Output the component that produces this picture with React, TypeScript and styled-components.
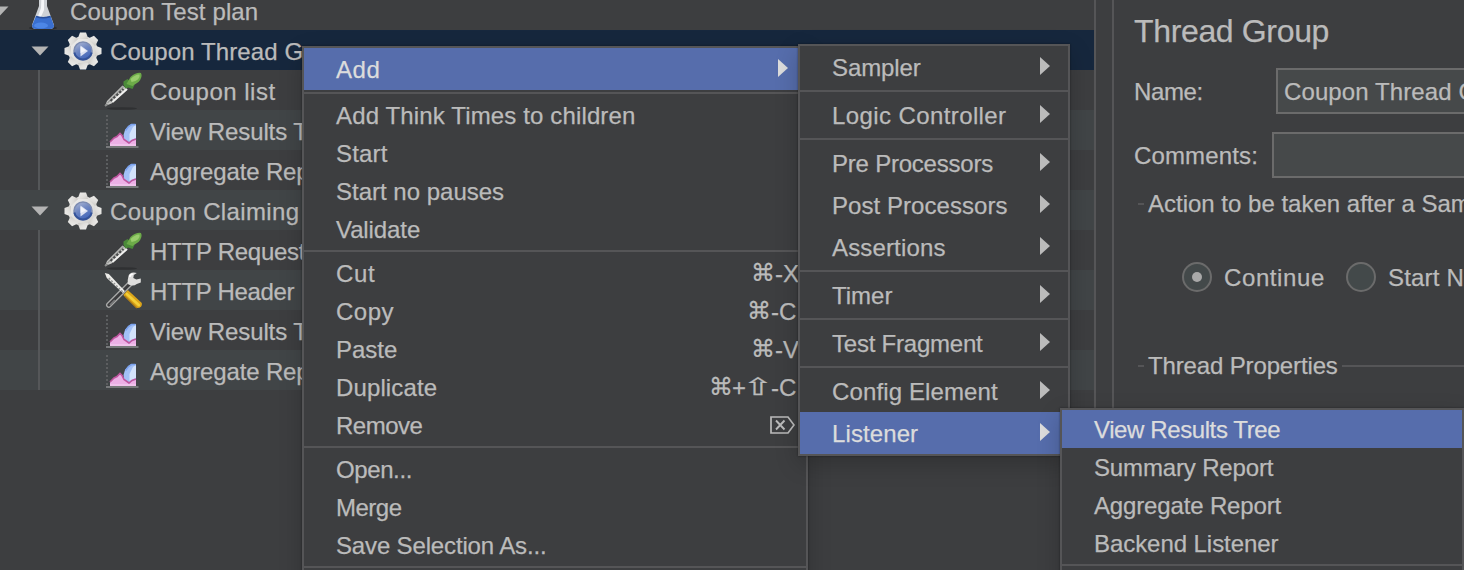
import React from "react";
import styled, { createGlobalStyle } from "styled-components";

const GlobalStyle = createGlobalStyle`
  html, body { margin: 0; padding: 0; background: #3d3e40; }
  * { box-sizing: border-box; }
`;

const Window = styled.div`
  position: relative;
  display: flex;
  width: 1464px;
  height: 570px;
  overflow: hidden;
  background: #3d3e40;
  color: #bbbbbb;
  font-family: "Liberation Sans", Arial, sans-serif;
  font-size: 24px;
  white-space: nowrap;
  -webkit-text-stroke: 0.25px currentColor;
`;

const Text = styled.span<{ $ls?: number }>`
  letter-spacing: ${(p) => p.$ls ?? 0}px;
`;

/* ---------- tree ---------- */

const TreePane = styled.div`
  width: 1096px;
  height: 570px;
  flex: none;
  border-right: 2px solid #555557;
  overflow: hidden;
`;

const TreeList = styled.div`
  margin-top: -10px;
`;

const TreeRow = styled.div<{ $tone: "plain" | "stripe" | "selected" }>`
  display: flex;
  align-items: stretch;
  height: 40px;
  line-height: 43px;
  background: ${(p) =>
    p.$tone === "selected" ? "#16273d" : p.$tone === "stripe" ? "#414547" : "#3d3e40"};
`;

const Guide = styled.div`
  width: 2px;
  margin: 0 64px 0 38px;
  background: #555759;
`;

const Toggle = styled.div<{ $depth: number }>`
  width: ${(p) => 22 + p.$depth * 40}px;
  display: flex;
  justify-content: flex-end;
  padding: 16px 13px 0 0;
  svg { flex: none; }
`;

const IconSlot = styled.div<{ $leaf: boolean }>`
  flex: none;
  width: 40px;
  height: 40px;
  margin-right: ${(p) => (p.$leaf ? 6 : 8)}px;
  svg { display: block; overflow: visible; }
`;

const Down = () => (
  <svg width="18" height="10" viewBox="0 0 18 10">
    <path d="M0.5 0.5H17.5L9 9.5Z" fill="#b4b4b4" />
  </svg>
);

const Flask = () => (
  <svg width="40" height="40" viewBox="0 0 40 40">
    <ellipse cx="21" cy="38" rx="14" ry="2" fill="#2b2c2e" />
    <path d="M17 4H25V16L32 35Q32 39 28 39H14Q10 39 10 35L17 16Z" fill="#cfd2d6" />
    <path d="M19.5 5H22V20L18 29H15L19 18Z" fill="#f5f6f8" />
    <path d="M14 26Q21 28 28.500 26L32 35.500Q32 39 28 39H14Q10 39 10 35.500Z" fill="#3a6fcf" />
    <path d="M14 26.500Q21 29 28.500 26.500" stroke="#2a4f9a" strokeWidth="1.500" fill="none" />
    <ellipse cx="19" cy="35.500" rx="7" ry="3" fill="#4d86e6" />
  </svg>
);

const Gear = () => (
  <svg width="40" height="40" viewBox="0 0 40 40">
    <defs>
      <linearGradient id="gearBody" x1="0" y1="0" x2="1" y2="1">
        <stop offset="0" stopColor="#efefed" />
        <stop offset="0.6" stopColor="#e0dfdc" />
        <stop offset="1" stopColor="#cbc9c5" />
      </linearGradient>
      <linearGradient id="gearBall" x1="0" y1="0" x2="0.5" y2="1">
        <stop offset="0" stopColor="#b4bdd6" />
        <stop offset="0.5" stopColor="#7088c2" />
        <stop offset="1" stopColor="#4468ba" />
      </linearGradient>
    </defs>
    <g fill="url(#gearBody)" transform="translate(21 21)">
      <circle r="14.800" />
      {[0, 45, 90, 135, 180, 225, 270, 315].map((a) => (
        <path key={a} d="M-5.400 -12L-3 -18.500H3L5.400 -12Z" transform={`rotate(${a})`} />
      ))}
    </g>
    <circle cx="21" cy="21" r="9" fill="url(#gearBall)" stroke="#7c8cb2" strokeWidth="1.500" />
    <path d="M12.300 22.500A8.900 8.900 0 0 0 29.700 22.500" stroke="#34539a" strokeWidth="2" fill="none" />
    <path d="M18.500 15.500L26 21L18.500 26.500Z" fill="#dbe1f1" />
    <path d="M18.500 16.500L24 20.500L18.500 23Z" fill="#f1f4fb" />
  </svg>
);

const Pipette = () => (
  <svg width="40" height="40" viewBox="0 0 40 40">
    <ellipse cx="18" cy="38.500" rx="15" ry="1.300" fill="#2f3032" />
    <g transform="translate(-1.500 0)">
      <path d="M2.500 36L4.500 31L20 15.500L25 19.500L9 33.500Z" fill="#c9c9c7" />
      <path d="M5 33L21 16.500" stroke="#9b9c9a" strokeWidth="1.600" fill="none" />
      <path d="M8 31L21 19" stroke="#4a4b4c" strokeWidth="2.200" strokeDasharray="2.500 1.500" />
      <path d="M10 32L24.500 19" stroke="#f0f0ee" strokeWidth="1.800" />
      <path d="M2.500 36L5 34" stroke="#8a8b8a" strokeWidth="2" />
      <path d="M21 11.500L25 9L32 15L30 19L26 17.500L23 18.500L21 15Z" fill="#4a8a38" />
      <path d="M24 14L28 7Q34 2 38.500 3Q40.500 7 36 12L30 16Z" fill="#6dab49" />
      <path d="M28 9Q33 4 37 4.500Q38 8 33 11L29 12Z" fill="#98cc6c" />
    </g>
  </svg>
);

const Chart = () => (
  <svg width="40" height="40" viewBox="0 0 40 40">
    <path d="M3 5V37" stroke="#5c5e60" strokeWidth="2" strokeDasharray="2 2" />
    <path d="M2 37H34.500" stroke="#77797b" strokeWidth="2" />
    <path d="M32 14H27.500L24.500 16L21 20L19.500 25L20 29L25 34L32 31Z" fill="#a3c0f6" />
    <path d="M32 15L29 17L25.500 24L25.500 31L32 28Z" fill="#d4e3fb" />
    <path d="M31.500 14.500H27.500L24.500 16.500L21.500 20.500" stroke="#7ba2ee" strokeWidth="1.600" fill="none" />
    <path d="M6 36V32.500L10 28L13 26.500L16 23.500L18 25L20 29L25 33.500L28 31L32 29.500V36Z" fill="#ecb0e6" />
    <path d="M6 32L10 28L13 26.500L16 23.500L18 25.500L20 29.500L25 33L28 30.500L32 29" stroke="#bf559f" strokeWidth="1.600" fill="none" />
    <path d="M6 35H32" stroke="#f0c2ec" strokeWidth="2" />
  </svg>
);

const Tools = () => (
  <svg width="40" height="40" viewBox="0 0 40 40">
    <g transform="translate(-1.200 0)">
      <path d="M6 35L29 12" stroke="#a9aaa9" strokeWidth="5.600" strokeLinecap="round" />
      <path d="M6 35L27 14" stroke="#3a3b3d" strokeWidth="3" strokeLinecap="round" />
      <path d="M7 35L12 30" stroke="#77797a" strokeWidth="1.300" />
      <path d="M31 2.500Q26 2.500 25.500 7Q24.500 10 25 14Q30 17 34 14L38 12.500V8.500L33.500 9.500L30.500 8L31 5L34 3Z" fill="#dededd" />
      <path d="M27 7Q27 4.500 30 4" stroke="#fff" strokeWidth="1.600" fill="none" />
      <path d="M2 3L6 4L22 21L20 23L4 8Z" fill="#ecece9" />
      <path d="M6 8L20 22" stroke="#8f9190" strokeWidth="1.400" strokeDasharray="2 1.500" />
      <path d="M20.500 25L25 20L39 33Q40 38 34 38Z" fill="#dba51a" />
      <path d="M24 24L36 35" stroke="#f3cf38" strokeWidth="2.600" strokeLinecap="round" />
      <path d="M22 26L34 38" stroke="#b07f16" strokeWidth="1.200" />
    </g>
  </svg>
);

type Node = {
  label: string;
  icon: () => React.ReactElement;
  depth: number;
  tone: "plain" | "stripe" | "selected";
  ls?: number;
};

const nodes: Node[] = [
  { label: "Coupon Test plan", icon: Flask, depth: 0, tone: "plain", ls: 0.12 },
  { label: "Coupon Thread Group", icon: Gear, depth: 1, tone: "selected", ls: 0.1 },
  { label: "Coupon list", icon: Pipette, depth: 2, tone: "plain", ls: 0.5 },
  { label: "View Results Tree", icon: Chart, depth: 2, tone: "stripe", ls: -0.1 },
  { label: "Aggregate Report", icon: Chart, depth: 2, tone: "plain", ls: -0.15 },
  { label: "Coupon Claiming", icon: Gear, depth: 1, tone: "stripe", ls: 0.35 },
  { label: "HTTP Request", icon: Pipette, depth: 2, tone: "plain", ls: -0.25 },
  { label: "HTTP Header Manager", icon: Tools, depth: 2, tone: "stripe", ls: -0.3 },
  { label: "View Results Tree", icon: Chart, depth: 2, tone: "plain", ls: -0.1 },
  { label: "Aggregate Report", icon: Chart, depth: 2, tone: "stripe", ls: -0.15 },
];

/* ---------- details panel ---------- */

const Details = styled.div`
  flex: 1;
  min-width: 0;
  margin-left: 16px;
  padding: 0 0 0 20px;
  border-left: 2px solid #555557;
  overflow: hidden;
`;

const Title = styled.div`
  height: 68px;
  line-height: 62px;
  font-size: 32px;
`;

const FormRow = styled.div<{ $label: number; $gap: number }>`
  display: grid;
  grid-template-columns: ${(p) => p.$label}px 400px;
  height: 46px;
  margin-bottom: ${(p) => p.$gap}px;
  line-height: 48px;
`;

const Field = styled.div`
  height: 46px;
  border: 2px solid #6b6b6b;
  background: #46494a;
  padding-left: 6px;
  line-height: 44px;
`;

const Legend = styled.div`
  display: flex;
  align-items: center;
  gap: 4px;
  height: 30px;
  line-height: 32px;
  padding-left: 4px;
  &::before {
    content: "";
    flex: none;
    width: 6px;
    height: 2px;
    background: #555557;
  }
  &::after {
    content: "";
    flex: 1;
    height: 2px;
    background: #555557;
  }
`;

const RadioRow = styled.div`
  display: flex;
  align-items: center;
  height: 30px;
  margin: 43px 0 59px;
  padding-left: 48px;
  line-height: 32px;
`;

const Radio = styled.span`
  display: grid;
  place-items: center;
  flex: none;
  width: 30px;
  height: 30px;
  margin-right: 12px;
  border: 2px solid #6b6b6b;
  border-radius: 50%;
  background: #43494a;
`;

const Dot = styled.span`
  width: 10px;
  height: 10px;
  border-radius: 50%;
  background: #a9a9a9;
`;

const RadioLabel = styled.span<{ $ls?: number }>`
  flex: none;
  width: 122px;
  padding-top: 2px;
  letter-spacing: ${(p) => p.$ls ?? 0}px;
`;

/* ---------- menus ---------- */

const Menu = styled.div<{ $x: number; $y: number; $w: number }>`
  position: absolute;
  left: ${(p) => p.$x}px;
  top: ${(p) => p.$y}px;
  width: ${(p) => p.$w}px;
  border: 2px solid #555557;
  background: #3d3e40;
  box-shadow: 0 0 2px rgba(0, 0, 0, 0.4), 0 8px 22px rgba(0, 0, 0, 0.2);
`;

const MenuItem = styled.div<{ $tall?: boolean; $active?: boolean; $end?: number }>`
  display: flex;
  align-items: center;
  justify-content: space-between;
  height: ${(p) => (p.$tall ? 42 : 38)}px;
  padding: 0 ${(p) => p.$end ?? 18}px 0 32px;
  background: ${(p) => (p.$active ? "#566dac" : "transparent")};
  color: ${(p) => (p.$active ? "#dcdcdc" : "#bbbbbb")};
  line-height: 39px;
`;

const Separator = styled.div`
  height: 6px;
  border: solid #3d3e40;
  border-width: 2px 0;
  background: #555557;
`;

const ArrowSvg = styled.svg`
  flex: none;
  margin-bottom: 2px;
`;

const Arrow = () => (
  <ArrowSvg width="10" height="18" viewBox="0 0 10 18">
    <path d="M0 0L10 9L0 18Z" fill="currentColor" />
  </ArrowSvg>
);

const Keys = styled.span`
  display: flex;
  align-items: center;
`;

const Key = styled.span<{ $w: number }>`
  width: ${(p) => p.$w}px;
`;

const SymbolKey = styled(Key)`
  padding-top: 1px;
  font-family: "DejaVu Sans", sans-serif;
`;

const ShiftKey = styled(SymbolKey)`
  transform: scaleX(1.5);
  transform-origin: 8px 50%;
`;

const DeleteSvg = styled.svg`
  margin-right: 4px;
`;

const DeleteKey = () => (
  <DeleteSvg width="25" height="18" viewBox="0 0 25 18" fill="none" stroke="currentColor">
    <path d="M1 1H18L24 9L18 17H1Z" strokeWidth="1.700" />
    <path d="M6 4.500L14.500 13.500M14.500 4.500L6 13.500" strokeWidth="1.900" />
  </DeleteSvg>
);

type Entry =
  | "-"
  | { label: string; ls?: number; keys?: [string, number][]; sub?: boolean; active?: boolean };

const contextMenu: Entry[] = [
  { label: "Add", sub: true, active: true, ls: 0.6 },
  "-",
  { label: "Add Think Times to children", ls: 0.14 },
  { label: "Start", ls: 0.2 },
  { label: "Start no pauses" },
  { label: "Validate", ls: -0.1 },
  "-",
  { label: "Cut", ls: 0.7, keys: [["⌘", 24], ["-", 8], ["X", 16]] },
  { label: "Copy", ls: 0.5, keys: [["⌘", 24], ["-", 8], ["C", 20]] },
  { label: "Paste", keys: [["⌘", 24], ["-", 8], ["V", 16]] },
  { label: "Duplicate", ls: 0.12, keys: [["⌘", 23], ["+", 15], ["⇧", 24], ["-", 8], ["C", 20]] },
  { label: "Remove", ls: -0.5, keys: [["⌦", 29]] },
  "-",
  { label: "Open...", ls: -0.4 },
  { label: "Merge", ls: -0.5 },
  { label: "Save Selection As...", ls: -0.15 },
  "-",
];

const addMenu: Entry[] = [
  { label: "Sampler", sub: true, ls: -0.1 },
  "-",
  { label: "Logic Controller", sub: true, ls: 0.4 },
  "-",
  { label: "Pre Processors", sub: true, ls: -0.22 },
  { label: "Post Processors", sub: true, ls: 0.05 },
  { label: "Assertions", sub: true, ls: 0.15 },
  "-",
  { label: "Timer", sub: true },
  "-",
  { label: "Test Fragment", sub: true, ls: -0.22 },
  "-",
  { label: "Config Element", sub: true, ls: 0.12 },
  { label: "Listener", sub: true, active: true, ls: 0.1 },
];

const listenerMenu: Entry[] = [
  { label: "View Results Tree", active: true, ls: -0.4 },
  { label: "Summary Report", ls: -0.15 },
  { label: "Aggregate Report", ls: -0.15 },
  { label: "Backend Listener", ls: -0.06 },
  "-",
];

const KeyCap = ({ k, w }: { k: string; w: number }) => {
  if (k === "⌦") return <DeleteKey />;
  if (k === "⇧") return <ShiftKey $w={w}>{k}</ShiftKey>;
  if (k === "⌘") return <SymbolKey $w={w}>{k}</SymbolKey>;
  return <Key $w={w}>{k}</Key>;
};

const Entries = ({ items }: { items: Entry[] }) => (
  <>
    {items.map((e, i) =>
      e === "-" ? (
        <Separator key={i} />
      ) : (
        <MenuItem key={i} $tall={e.sub} $active={e.active} $end={e.keys ? 7 : undefined}>
          <Text $ls={e.ls}>{e.label}</Text>
          {e.sub && <Arrow />}
          {e.keys && (
            <Keys>
              {e.keys.map(([k, w], j) => (
                <KeyCap key={j} k={k} w={w} />
              ))}
            </Keys>
          )}
        </MenuItem>
      )
    )}
  </>
);

export default function App() {
  return (
    <>
      <GlobalStyle />
      <Window>
        <TreePane>
          <TreeList>
            {nodes.map((n, i) => (
              <TreeRow key={i} $tone={n.tone}>
                {n.depth === 2 ? (
                  <Guide />
                ) : (
                  <Toggle $depth={n.depth}>
                    <Down />
                  </Toggle>
                )}
                <IconSlot $leaf={n.depth === 2}>
                  <n.icon />
                </IconSlot>
                <Text $ls={n.ls}>{n.label}</Text>
              </TreeRow>
            ))}
          </TreeList>
        </TreePane>
        <Details>
          <Title>
            <Text $ls={-0.35}>Thread Group</Text>
          </Title>
          <FormRow $label={142} $gap={18}>
            <Text $ls={-0.4}>Name:</Text>
            <Field>
              <Text $ls={0.1}>Coupon Thread Group</Text>
            </Field>
          </FormRow>
          <FormRow $label={138} $gap={11}>
            <Text $ls={0.15}>Comments:</Text>
            <Field />
          </FormRow>
          <Legend>
            <Text>Action to be taken after a Sampler error</Text>
          </Legend>
          <RadioRow>
            <Radio>
              <Dot />
            </Radio>
            <RadioLabel $ls={0.6}>Continue</RadioLabel>
            <Radio />
            <RadioLabel $ls={0.2}>Start Next Thread Loop</RadioLabel>
          </RadioRow>
          <Legend>
            <Text $ls={-0.14}>Thread Properties</Text>
          </Legend>
        </Details>
        <Menu $x={302} $y={46} $w={506}>
          <Entries items={contextMenu} />
          <MenuItem />
        </Menu>
        <Menu $x={798} $y={44} $w={272}>
          <Entries items={addMenu} />
        </Menu>
        <Menu $x={1060} $y={408} $w={404}>
          <Entries items={listenerMenu} />
          <MenuItem />
        </Menu>
      </Window>
    </>
  );
}
